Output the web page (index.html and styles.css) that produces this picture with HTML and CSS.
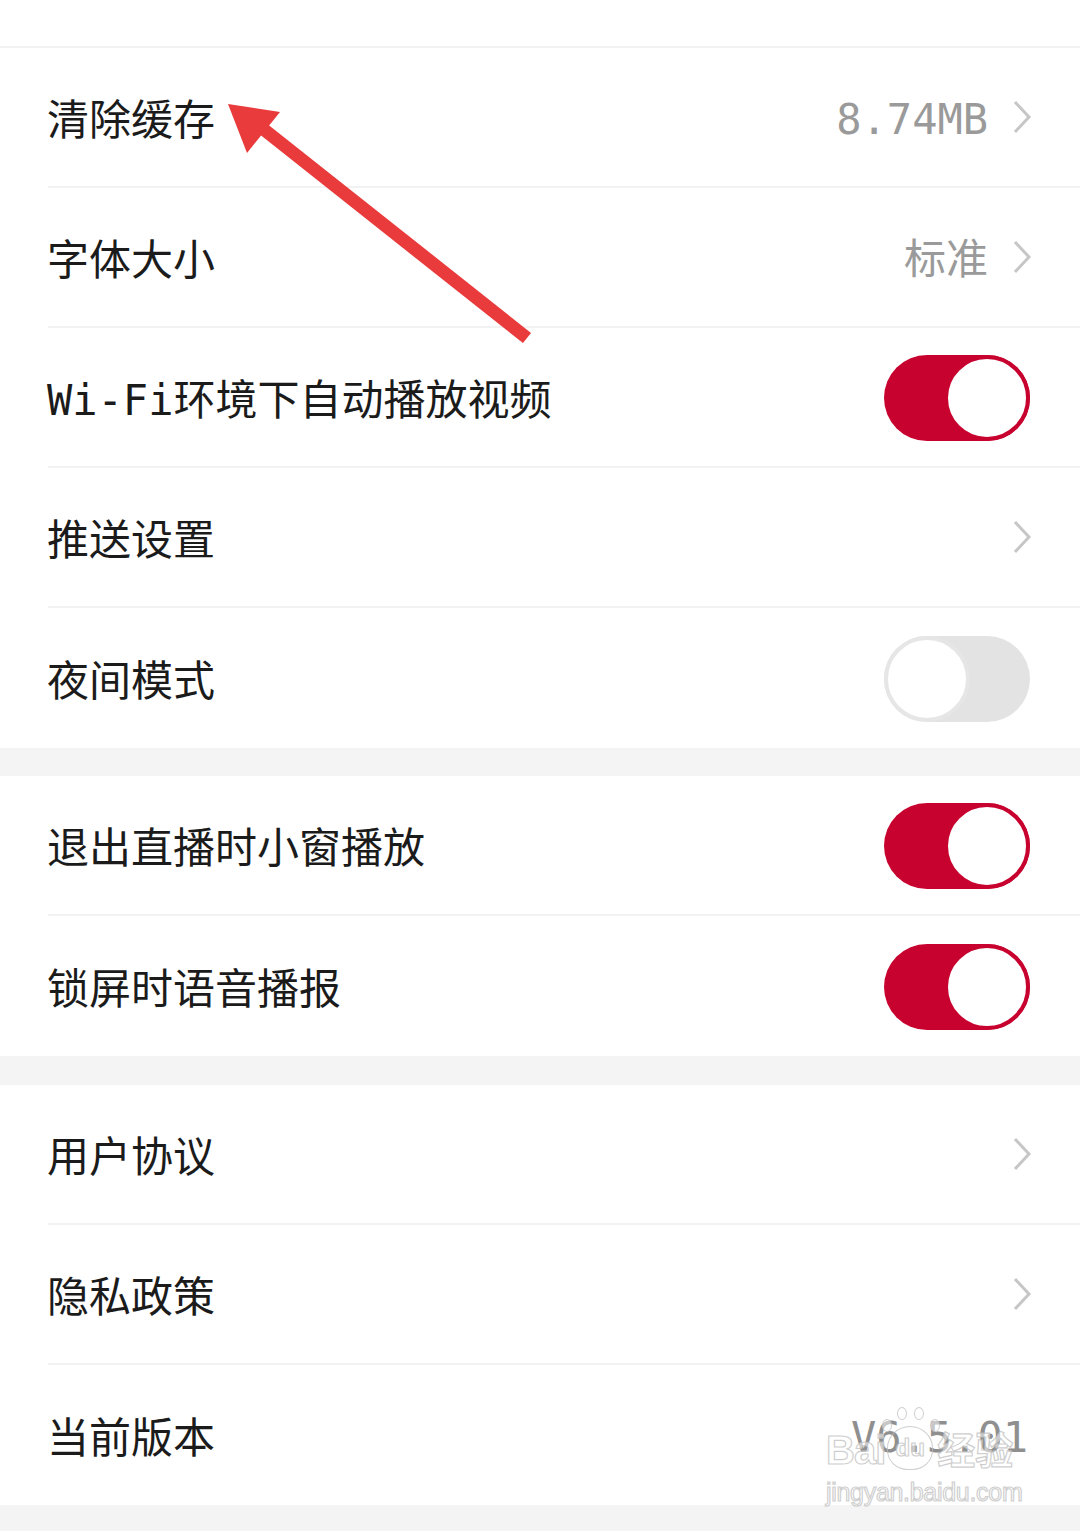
FILE: index.html
```html
<!DOCTYPE html>
<html lang="zh-CN">
<head>
<meta charset="utf-8">
<title>设置</title>
<link rel="stylesheet" href="styles.css">
</head>
<body>
<div class="page">
  <div class="top"></div>

  <section class="group">
    <div class="row">
      <span class="label">清除缓存</span>
      <span class="value">8.74MB</span>
      <svg class="chev" viewBox="0 0 20 34"><polyline points="3,2 17,17 3,32"/></svg>
    </div>
    <div class="row">
      <span class="label">字体大小</span>
      <span class="value">标准</span>
      <svg class="chev" viewBox="0 0 20 34"><polyline points="3,2 17,17 3,32"/></svg>
    </div>
    <div class="row">
      <span class="label">Wi-Fi环境下自动播放视频</span>
      <span class="switch on"><span class="knob"></span></span>
    </div>
    <div class="row">
      <span class="label">推送设置</span>
      <svg class="chev" viewBox="0 0 20 34"><polyline points="3,2 17,17 3,32"/></svg>
    </div>
    <div class="row">
      <span class="label">夜间模式</span>
      <span class="switch off"><span class="knob"></span></span>
    </div>
  </section>

  <div class="gap"></div>

  <section class="group">
    <div class="row">
      <span class="label">退出直播时小窗播放</span>
      <span class="switch on"><span class="knob"></span></span>
    </div>
    <div class="row">
      <span class="label">锁屏时语音播报</span>
      <span class="switch on"><span class="knob"></span></span>
    </div>
  </section>

  <div class="gap gap2"></div>

  <section class="group">
    <div class="row">
      <span class="label">用户协议</span>
      <svg class="chev" viewBox="0 0 20 34"><polyline points="3,2 17,17 3,32"/></svg>
    </div>
    <div class="row">
      <span class="label">隐私政策</span>
      <svg class="chev" viewBox="0 0 20 34"><polyline points="3,2 17,17 3,32"/></svg>
    </div>
    <div class="row">
      <span class="label">当前版本</span>
      <span class="value version">V6.5.01</span>
    </div>
  </section>

  <div class="bottom"></div>

  <svg class="arrow" viewBox="0 0 1080 1531" width="1080" height="1531">
    <line x1="527" y1="338" x2="262" y2="128"/>
    <polygon points="228,104 280,112 247,153"/>
  </svg>

  <div class="watermark">
    <div class="wm-logo">
      <span class="wm-bai">Bai</span>
      <span class="wm-paw">
        <i class="toe t1"></i><i class="toe t2"></i><i class="toe t3"></i><i class="toe t4"></i>
        <span class="wm-du">du</span>
      </span>
      <span class="wm-jy">经验</span>
    </div>
    <div class="wm-url">jingyan.baidu.com</div>
  </div>
</div>
</body>
</html>
```
FILE: styles.css
```css
* { box-sizing: border-box; }
html, body { margin: 0; padding: 0; background: #ffffff; }
body {
  font-family: "DejaVu Sans Mono", "Noto Sans CJK SC", monospace;
  color: #1b1b1b;
}
.page { position: relative; width: 1080px; min-height: 1531px; overflow: hidden; }

.top { height: 48px; border-bottom: 2px solid #f1f1f1; }

.group { background: #ffffff; }
.gap { height: 28px; background: #f4f4f4; }
.gap2 { height: 29px; }
.bottom { height: 26px; background: #f4f4f4; }

.row {
  display: flex;
  align-items: center;
  height: 140px;
  margin-left: 48px;
  padding-right: 48px;
  border-bottom: 2px solid #f2f2f2;
}
.row:last-child { border-bottom: none; }

.label {
  flex: 1;
  font-size: 42px;
  line-height: 1;
  padding-top: 8px;
  margin-left: -1px;
}

.value {
  font-size: 42px;
  line-height: 1;
  color: #9a9a9a;
  margin-right: 24px;
  padding-top: 6px;
}
.value.version { margin-right: 4px; color: #8f8f8f; }

.chev {
  width: 20px;
  height: 34px;
  fill: none;
  stroke: #c6c6c6;
  stroke-width: 3;
}

.switch {
  position: relative;
  width: 146px;
  height: 86px;
  border-radius: 43px;
  margin-right: 2px;
  margin-top: 2px;
}
.switch.on { background: #c8022f; }
.switch.off { background: #e3e3e3; }
.switch .knob {
  position: absolute;
  top: 0;
  width: 86px;
  height: 86px;
  border-radius: 50%;
  background: #ffffff;
}
.switch.on .knob { right: 0; border: 4px solid #c8022f; }
.switch.off .knob { left: 0; border: 4px solid #e6e6e6; }

.arrow { position: absolute; left: 0; top: 0; pointer-events: none; }
.arrow line { stroke: #e93a3c; stroke-width: 13; }
.arrow polygon { fill: #e93a3c; }

.watermark {
  position: absolute;
  left: 826px;
  top: 1410px;
  width: 200px;
  font-family: "Liberation Sans", "Noto Sans CJK SC", sans-serif;
  color: rgba(255, 255, 255, 0.55);
  -webkit-text-stroke: 1.2px rgba(190, 190, 190, 0.75);
  pointer-events: none;
}
.wm-logo { display: flex; align-items: flex-end; height: 60px; }
.wm-bai { font-size: 40px; font-weight: bold; line-height: 1; letter-spacing: -1px; }
.wm-paw {
  position: relative;
  width: 46px;
  height: 44px;
  margin: 0 2px 0 2px;
  border: 1.5px solid rgba(190, 190, 190, 0.75);
  border-radius: 50% 50% 45% 45%;
  display: flex;
  align-items: center;
  justify-content: center;
}
.wm-du { font-size: 24px; font-weight: bold; line-height: 1; }
.toe {
  position: absolute;
  width: 10px;
  height: 13px;
  border-radius: 50%;
  border: 1.5px solid rgba(190, 190, 190, 0.75);
  background: rgba(255, 255, 255, 0.5);
}
.t1 { left: -6px; top: -8px; }
.t2 { left: 9px; top: -20px; }
.t3 { left: 26px; top: -20px; }
.t4 { left: 42px; top: -8px; }
.wm-jy { font-size: 38px; font-weight: bold; line-height: 1; margin-left: 2px; }
.wm-url { font-size: 25px; line-height: 1; margin-top: 10px; letter-spacing: -0.3px; }
```
